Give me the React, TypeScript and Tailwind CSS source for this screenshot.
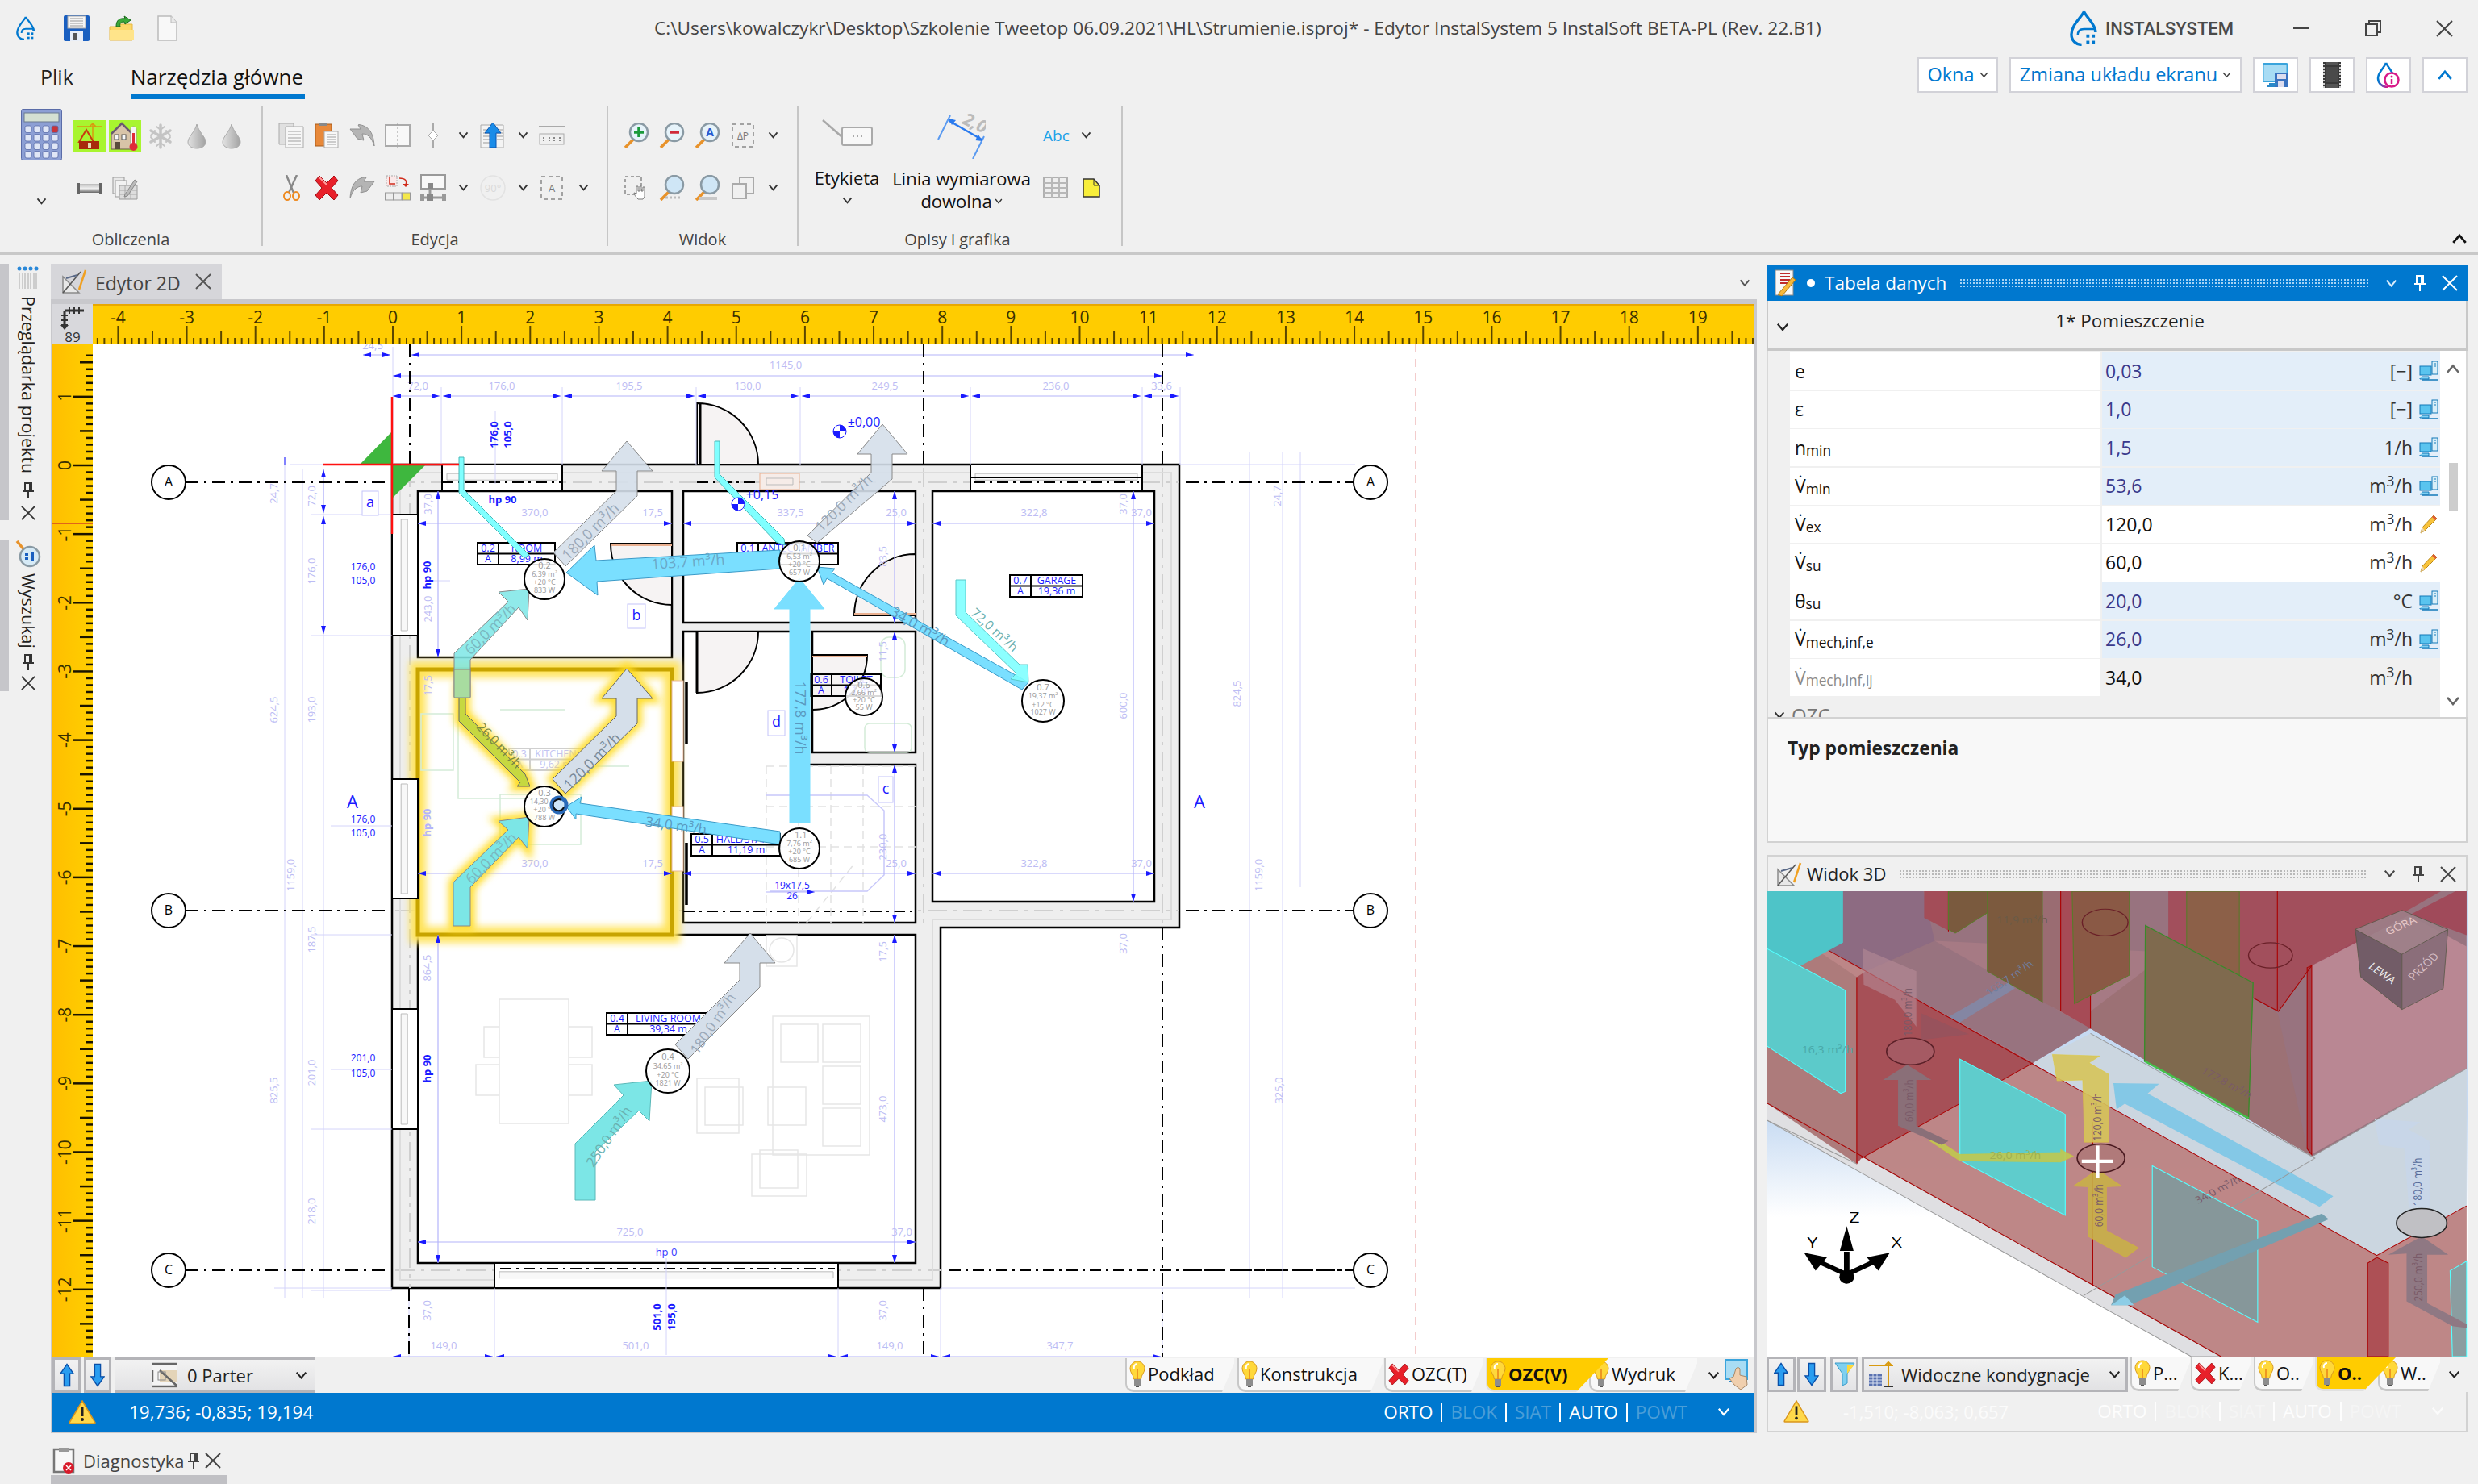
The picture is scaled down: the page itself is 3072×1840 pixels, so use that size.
import React from "react";

const BLUE = "#0078cf";

// --- small shared icons ---

const Chev = ({ size = 14, color = "#222", up = false }: { size?: number; color?: string; up?: boolean }) => (
  <svg width={size} height={size * 0.7} viewBox="0 0 14 10" className="shrink-0">
    <path d={up ? "M1.5 8.5 7 2l5.5 6.5" : "M1.5 1.5 7 8l5.5-6.5"} fill="none" stroke={color} strokeWidth="2" />
  </svg>
);

const Pin = ({ color = "#444" }: { color?: string }) => (
  <svg width="16" height="22" viewBox="0 0 16 22" className="shrink-0">
    <path d="M4 2h8v10H4zM1 12h14M8 12v9M10 2v10" fill="none" stroke={color} strokeWidth="2" />
  </svg>
);

const CloseX = ({ size = 20, color = "#444", width = 2 }: { size?: number; color?: string; width?: number }) => (
  <svg width={size} height={size} viewBox="0 0 20 20" className="shrink-0">
    <path d="M1 1l18 18M19 1 1 19" stroke={color} strokeWidth={width} />
  </svg>
);

const Bulb = () => (
  <svg width="20" height="34" viewBox="0 0 20 34" className="shrink-0">
    <path d="M10 1C4 1 1 6 1 10c0 5 4 7 4.500 13h9C15 17 19 15 19 10c0-4-3-9-9-9z" fill="#ffd83a" stroke="#d99a1c" />
    <path d="M10 4c-3 0-5 3-4 6" stroke="#fff" strokeWidth="2" fill="none" />
    <path d="M10 23V11" stroke="#e8821a" strokeWidth="1.500" />
    <rect x="6" y="23" width="8" height="8" fill="#8d8d8d" />
    <rect x="8" y="31" width="4" height="2" fill="#555" />
  </svg>
);

const RedX = ({ w = 30, h = 32 }: { w?: number; h?: number }) => (
  <svg width={w} height={h} viewBox="0 0 30 32" className="shrink-0">
    <path d="M6 1l9 9 9-9 5 6-8 9 8 9-5 6-9-9-9 9-5-6 8-9-8-9z" fill="#e8202a" stroke="#a00e14" />
    <path d="M6 3l9 9" stroke="#ff9a9a" strokeWidth="2" />
  </svg>
);

const Warn = ({ w = 34, h = 30 }: { w?: number; h?: number }) => (
  <svg width={w} height={h} viewBox="0 0 34 30" className="shrink-0">
    <path d="M17 1 33 28a1 1 0 0 1-1 1H2a1 1 0 0 1-1-1z" fill="#ffd84a" stroke="#d9951c" strokeWidth="1.500" />
    <path d="M17 8v12" stroke="#222" strokeWidth="3" />
    <circle cx="17" cy="24" r="2" fill="#222" />
  </svg>
);

const ArrowBtn = ({ up, w = 20, h = 32 }: { up?: boolean; w?: number; h?: number }) => (
  <svg width={w} height={h} viewBox="0 0 20 32" className="shrink-0">
    <path
      d={up ? "M10 1 19 14h-5v17H6V14H1z" : "M10 31 19 18h-5V1H6v17H1z"}
      fill="#2a9df0"
      stroke="#0a4fa8"
      strokeWidth="1.500"
    />
  </svg>
);

const Computer = () => (
  <svg width="24" height="26" viewBox="0 0 24 26" className="shrink-0">
    <rect x="1" y="7" width="14" height="11" fill="#5ac4ef" stroke="#1278b8" />
    <path d="M4 20h8v3H1v-1" fill="#7fd0f2" stroke="#1278b8" />
    <rect x="16" y="1" width="7" height="16" fill="#d8eef8" stroke="#1278b8" />
    <path d="M18 4h3M18 7h3" stroke="#1278b8" />
    <path d="M3 24h20" stroke="#1278b8" strokeWidth="1.500" />
  </svg>
);

const Pencil = () => (
  <svg width="24" height="26" viewBox="0 0 24 26" className="shrink-0">
    <path d="M2 24l2-7L18 2l4 4L7 21z" fill="#f8c23a" stroke="#b88a20" />
    <path d="M18 2l4 4-2 2-4-4z" fill="#e05a3a" />
    <path d="M2 24l2-7 3 4z" fill="#eed8b0" />
  </svg>
);

const Drafting = () => (
  <svg width="32" height="32" viewBox="0 0 32 32" className="shrink-0">
    <path d="M2 30V10l20 20z" fill="#e8e8e8" stroke="#8a8a8a" strokeWidth="1.500" />
    <path d="M2 30 24 4" stroke="#555" strokeWidth="1.500" />
    <path d="M6 12 20 8" stroke="#5a6a88" strokeWidth="2" />
    <path d="M22 26 30 2" stroke="#f0a020" strokeWidth="2.500" />
  </svg>
);

// ribbon icons: all drawn at the size they have in the toolbar
const Calculator = () => (
  <svg width="51" height="64" viewBox="0 0 51 64" className="shrink-0">
    <rect x="0.500" y="0.500" width="50" height="63" rx="2" fill="#8c9fd4" stroke="#5a6ca8" />
    <rect x="4" y="5" width="43" height="11" fill="#d4e0d2" stroke="#6a7a90" />
    {[0, 1, 2, 3].flatMap((r) =>
      [0, 1, 2, 3].map((c) => (
        <rect key={`${r}-${c}`} x={5 + c * 11} y={21 + r * 10.500} width="8" height="8.500" rx="2" fill={r === 0 && c === 3 ? "#c8343a" : "#dfe6f6"} stroke="#5a6ca8" strokeWidth="0.800" />
      ))
    )}
  </svg>
);

const LimeCrane = () => (
  <div className="w-[40px] h-[40px] bg-[#a8f52f] shrink-0">
    <svg width="40" height="40" viewBox="0 0 40 40">
      <path d="M5 8h31M24 4v30M20 8l4-4 4 4" stroke="#d89a10" strokeWidth="1.500" fill="none" />
      <path d="M16 12 7 27h18z" fill="none" stroke="#c83a10" strokeWidth="2" />
      <rect x="7" y="26" width="25" height="10" fill="#a82a0c" />
      <rect x="18" y="28" width="4" height="6" fill="#e8d8b0" />
    </svg>
  </div>
);

const LimeHouse = () => (
  <div className="w-[40px] h-[40px] bg-[#a8f52f] shrink-0">
    <svg width="40" height="40" viewBox="0 0 40 40">
      <path d="M3 17 16 4l13 13v19H3z" fill="#d8c4a8" stroke="#6a5a48" />
      <path d="M3 17 16 4l13 13" stroke="#6a5a70" strokeWidth="2.500" fill="none" />
      <rect x="7" y="18" width="5" height="6" fill="#f8f8f8" stroke="#555" />
      <rect x="16" y="18" width="5" height="6" fill="#f8f8f8" stroke="#555" />
      <rect x="8" y="27" width="6" height="9" fill="#5a4a3a" />
      <rect x="27" y="8" width="7" height="24" rx="3" fill="#f4f4f4" stroke="#999" />
      <rect x="29" y="16" width="3" height="16" fill="#e02a3a" />
      <circle cx="30.500" cy="33" r="5" fill="#e02a3a" />
    </svg>
  </div>
);

const Snow = () => (
  <svg width="31" height="32" viewBox="0 0 31 32" className="shrink-0">
    <g stroke="#c4c4c4" strokeWidth="3.500" strokeLinecap="round">
      <path d="M15 2v28M3 9l24 14M27 9 3 23" />
      <path d="M10 4l5 4 5-4M10 28l5-4 5 4M3 15l5-6M27 15l-5-6M3 17l5 6M27 17l-5 6" strokeWidth="2" fill="none" />
    </g>
  </svg>
);

const Drop = () => (
  <svg width="24" height="32" viewBox="0 0 24 32" className="shrink-0">
    <defs>
      <linearGradient id="dropGray" x1="0" x2="1">
        <stop offset="0" stopColor="#e2e2e2" />
        <stop offset="1" stopColor="#a2a2a2" />
      </linearGradient>
    </defs>
    <path d="M12 1C10 10 1 17 1 23c0 5 5 8 11 8s11-3 11-8C23 17 14 10 12 1z" fill="url(#dropGray)" stroke="#aaa" />
  </svg>
);

const Pipe = () => (
  <svg width="30" height="13" viewBox="0 0 30 13" className="shrink-0">
    <defs>
      <linearGradient id="pipeG" x1="0" x2="0" y1="0" y2="1">
        <stop offset="0" stopColor="#bbb" />
        <stop offset="0.500" stopColor="#eee" />
        <stop offset="1" stopColor="#666" />
      </linearGradient>
    </defs>
    <rect x="2" y="1" width="26" height="11" fill="url(#pipeG)" />
    <rect width="3" height="13" fill="#666" />
    <rect x="27" width="3" height="13" fill="#666" />
  </svg>
);

const PagesPencil = () => (
  <svg width="33" height="29" viewBox="0 0 33 29" className="shrink-0">
    <path d="M1 1h14v20H1z" fill="#e8e8e8" stroke="#999" />
    <path d="M4 5h14v20H4z" fill="#f2f2f2" stroke="#999" />
    <path d="M9 11h22v17H9z" fill="#ddd" stroke="#999" />
    <path d="M16 11v17M23 11v17M9 17h22M9 22h22" stroke="#aaa" />
    <path d="M16 22 28 4l3 2-12 18-4 1z" fill="#bbb" stroke="#888" />
  </svg>
);

const CopyPages = () => (
  <svg width="32" height="32" viewBox="0 0 32 32" className="shrink-0">
    <path d="M1 1h18v26H1z" fill="#e0e0e0" stroke="#aaa" />
    <path d="M9 5h22v26H9z" fill="#f6f6f6" stroke="#aaa" />
    <path d="M12 11h16M12 15h16M12 19h16M12 23h16M12 27h16" stroke="#a0a0a0" />
  </svg>
);

const PasteIcon = () => (
  <svg width="30" height="32" viewBox="0 0 30 32" className="shrink-0">
    <rect x="1" y="2" width="20" height="27" fill="#e8893a" stroke="#a85a18" />
    <rect x="6" y="0" width="10" height="4" fill="#888" />
    <path d="M12 11h17v20H12z" fill="#f8f8f8" stroke="#aaa" />
    <path d="M15 15h11M15 18h11M15 21h11M15 24h11M15 27h11" stroke="#a0a0a0" />
  </svg>
);

const TurnArrow = ({ flip = false }: { flip?: boolean }) => (
  <svg width="32" height="28" viewBox="0 0 32 28" className="shrink-0" style={flip ? { transform: "scaleX(-1)" } : undefined}>
    <path d="M1 6h13L11 1l1-0.500 C22 2 30 8 31 27c-3-10-8-15-15-15l2 8-8-2z" fill="#b4b4b4" stroke="#909090" />
  </svg>
);

const MirrorBox = () => (
  <svg width="32" height="32" viewBox="0 0 32 32" className="shrink-0">
    <rect x="1" y="3" width="30" height="26" fill="#f8f8f8" stroke="#aaa" strokeWidth="2" />
    <path d="M16 0v32" stroke="#999" strokeDasharray="3 2" />
  </svg>
);

const DiamondLine = () => (
  <svg width="28" height="32" viewBox="0 0 28 32" className="shrink-0">
    <path d="M14 0v10M14 22v10" stroke="#aaa" strokeWidth="2" />
    <path d="M14 10l6 6-6 6-6-6z" fill="#fff" stroke="#aaa" />
  </svg>
);

const DocUp = () => (
  <svg width="32" height="32" viewBox="0 0 32 32" className="shrink-0">
    <path d="M1 3h28v28H1z" fill="#f4f4f4" stroke="#aaa" />
    <path d="M4 9h8M4 13h8M4 17h8M4 21h8M4 25h8M21 9h7M21 13h7M21 17h7M21 21h7" stroke="#999" />
    <path d="M16 0 26 13h-6v18h-8V13H6z" fill="#1a8ce8" stroke="#0a55b0" />
  </svg>
);

const RulerBox = () => (
  <svg width="32" height="24" viewBox="0 0 32 24" className="shrink-0">
    <path d="M0 1h32" stroke="#aaa" strokeWidth="2" />
    <rect x="1" y="10" width="30" height="13" fill="#f0f0f0" stroke="#aaa" />
    <path d="M6 14v6M13 14v6M19 14v6M26 14v6" stroke="#888" strokeDasharray="2 1" strokeWidth="2" />
  </svg>
);

const Scissors = () => (
  <svg width="23" height="32" viewBox="0 0 23 32" className="shrink-0">
    <path d="M5 0l9 22M18 0 8 22" stroke="#888" strokeWidth="2.500" />
    <ellipse cx="6" cy="26" rx="4" ry="5" fill="none" stroke="#ee8a20" strokeWidth="2" />
    <ellipse cx="17" cy="26" rx="4" ry="5" fill="none" stroke="#ee8a20" strokeWidth="2" />
  </svg>
);

const LayerMove = () => (
  <svg width="32" height="32" viewBox="0 0 32 32" className="shrink-0">
    <rect x="2" y="1" width="13" height="13" fill="#fbe8e8" stroke="#aaa" strokeDasharray="2 1" />
    <path d="M6 3v8h7" stroke="#d02a1a" strokeWidth="1.500" fill="none" />
    <path d="M18 4c8 0 10 4 8 8" stroke="#d02a1a" strokeWidth="1.500" fill="none" />
    <path d="M22 11h8l-4 4z" fill="#d02a1a" />
    <rect x="0.500" y="22" width="10" height="9" fill="#eee" stroke="#999" />
    <rect x="11" y="22" width="10" height="9" fill="#eee" stroke="#999" />
    <rect x="21.500" y="22" width="10" height="9" fill="#f4e84a" stroke="#999" />
  </svg>
);

const NodeBox = () => (
  <svg width="32" height="33" viewBox="0 0 32 33" className="shrink-0">
    <rect x="1" y="1" width="30" height="17" fill="#f8f8f8" stroke="#999" strokeWidth="2" />
    <path d="M1 29h30M12 14v15" stroke="#999" strokeWidth="3" />
    <rect x="9" y="11" width="7" height="7" fill="#888" />
    <rect x="8" y="25" width="8" height="8" fill="#888" />
    <rect x="0" y="25" width="5" height="8" fill="#999" />
    <rect x="27" y="25" width="5" height="8" fill="#999" />
  </svg>
);

const Rot90 = () => (
  <svg width="32" height="32" viewBox="0 0 32 32" className="shrink-0">
    <circle cx="16" cy="16" r="15" fill="none" stroke="#e2e2e2" strokeWidth="1.500" />
    <text x="16" y="21" textAnchor="middle" fontSize="13" fill="#dadada">90°</text>
  </svg>
);

const DashBox = ({ text, w = 28, h = 30, size = 13 }: { text: string; w?: number; h?: number; size?: number }) => (
  <svg width={w} height={h} viewBox={`0 0 ${w} ${h}`} className="shrink-0">
    <rect x="1" y="1" width={w - 2} height={h - 2} fill="none" stroke="#888" strokeWidth="1.500" strokeDasharray="5 4" />
    <text x={w / 2} y={h / 2 + 5} textAnchor="middle" fontSize={size} fill="#777">{text}</text>
  </svg>
);

const Magnifier = ({ kind }: { kind: "plus" | "minus" | "a" | "plain" | "shade" }) => (
  <svg width="32" height="32" viewBox="0 0 32 32" className="shrink-0">
    <path d="M12 21 2 31" stroke="#e8922a" strokeWidth="3.500" />
    <circle cx="19" cy="12" r="11" fill={kind === "plain" || kind === "shade" ? "#cfe6f6" : "#e6f3fa"} stroke="#8a9aa4" strokeWidth="2.500" />
    {kind === "plus" && <path d="M19 6v12M13 12h12" stroke="#1a9a3a" strokeWidth="3.500" />}
    {kind === "minus" && <path d="M13 12h12" stroke="#d02a3a" strokeWidth="3.500" />}
    {kind === "a" && <text x="19" y="17" textAnchor="middle" fontSize="14" fontWeight="700" fill="#2a5ad0">A</text>}
    {kind === "shade" && <path d="M6 27h22v4H6z" fill="#c8c8c8" />}
    {kind === "plain" && <path d="M8 28h20" stroke="#bbb" strokeWidth="3" strokeDasharray="3 2" />}
  </svg>
);

const HandDash = () => (
  <svg width="30" height="30" viewBox="0 0 30 30" className="shrink-0">
    <rect x="1" y="1" width="20" height="22" fill="none" stroke="#888" strokeWidth="1.500" strokeDasharray="4 3" />
    <path d="M17 29c-3-3-5-6-5-8l3 1v-9h2v6h2v-6h2v6h2v-5h2v12l-2 3z" fill="#fff" stroke="#777" />
  </svg>
);

const TwoBoxes = () => (
  <svg width="28" height="28" viewBox="0 0 28 28" className="shrink-0">
    <rect x="10" y="1" width="17" height="20" fill="none" stroke="#aaa" strokeWidth="2" />
    <rect x="1" y="9" width="17" height="18" fill="#f0f0f0" stroke="#aaa" strokeWidth="2" />
  </svg>
);

const Label = () => (
  <svg width="63" height="33" viewBox="0 0 63 33" className="shrink-0">
    <path d="M1 1 25 22" stroke="#a8a8a8" strokeWidth="2.500" />
    <rect x="25" y="10" width="37" height="22" rx="2" fill="#f8f8f8" stroke="#aaa" strokeWidth="2" />
    <path d="M38 21h2M43 21h2M48 21h2" stroke="#aaa" strokeWidth="2" />
  </svg>
);

const DimLine = () => (
  <svg width="60" height="60" viewBox="0 0 60 60" className="shrink-0">
    <path d="M16 6 1 36M58 32 44 60" stroke="#5a9af0" strokeWidth="2" />
    <path d="M15 13 55 36" stroke="#2a7aee" strokeWidth="2.500" />
    <path d="M14 10l9 2-5 6zM56 38l-9-1 4-7z" fill="#2a7aee" />
    <text x="30" y="16" fontSize="22" fontStyle="italic" fontWeight="700" fill="#bbb" transform="rotate(25 30 16)">2,0</text>
  </svg>
);

const GridIcon = () => (
  <svg width="31" height="28" viewBox="0 0 31 28" className="shrink-0">
    <rect x="1" y="1" width="29" height="25" fill="#eee" stroke="#b0b0b0" strokeWidth="2" />
    <path d="M11 1v25M20 1v25M1 8h29M1 14h29M1 20h29" stroke="#b8b8b8" strokeWidth="2" />
  </svg>
);

const YellowDoc = () => (
  <svg width="22" height="24" viewBox="0 0 22 24" className="shrink-0">
    <path d="M1 1h13l7 8v14H1z" fill="#f8ee3a" stroke="#333" strokeWidth="1.500" />
    <path d="M14 1v8h7" fill="none" stroke="#333" />
  </svg>
);

// --- title bar icons ---
const LogoDrop = ({ w, h, small }: { w: number; h: number; small?: boolean }) => (
  <svg width={w} height={h} viewBox="0 0 36 44" className="shrink-0">
    <path d="M18 1C14 9 2 18 2 30c0 8 6 13 13 13" fill="none" stroke={BLUE} strokeWidth="3.500" />
    <path d="M18 1c4 8 14 15 15 26" fill="none" stroke={BLUE} strokeWidth="3.500" />
    <path d="M10 31c0-7 4-8 8-8h14v4" fill="none" stroke={BLUE} strokeWidth={small ? 3 : 2.500} />
    <rect x="21" y="30" width="4" height="4" fill={BLUE} />
    <rect x="28" y="30" width="4" height="4" fill={BLUE} />
    <rect x="21" y="38" width="4" height="4" fill={BLUE} />
    <rect x="28" y="38" width="4" height="4" fill={BLUE} />
  </svg>
);

const Floppy = () => (
  <svg width="32" height="32" viewBox="0 0 32 32" className="shrink-0">
    <rect width="32" height="32" rx="2" fill="#1a5fc0" />
    <rect x="5" y="1" width="22" height="15" fill="#f4f4f4" stroke="#aaa" />
    <path d="M8 4h16M8 7h16M8 10h16M8 13h16" stroke="#999" />
    <rect x="8" y="20" width="16" height="12" fill="#e8eef8" />
    <rect x="11" y="22" width="5" height="9" fill="#555" />
  </svg>
);

const OpenFolder = () => (
  <svg width="32" height="32" viewBox="0 0 32 32" className="shrink-0">
    <path d="M1 14h10l2-3h16v20H1z" fill="#fdd868" stroke="#e8b840" />
    <path d="M1 31V18h30v13z" fill="#ffe48a" />
    <path d="M9 14C9 6 13 3 20 4l-1-3 8 5-7 5-1-3c-4 0-6 2-5 6z" fill="#3aa83a" stroke="#1a6a1a" />
  </svg>
);

const BlankDoc = () => (
  <svg width="25" height="32" viewBox="0 0 25 32" className="shrink-0">
    <path d="M1 1h16l7 8v22H1z" fill="#f8f8f8" stroke="#bbb" strokeWidth="1.500" />
    <path d="M17 1v8h7" fill="#e8e8e8" stroke="#bbb" />
  </svg>
);

const SaveScreen = () => (
  <svg width="32" height="30" viewBox="0 0 32 30">
    <rect x="0.500" y="1" width="30" height="22" rx="1" fill="#a8dcf4" stroke="#3aa4dc" strokeWidth="2" />
    <rect x="15" y="12" width="17" height="18" fill="#3a72c0" />
    <rect x="18" y="14" width="11" height="6" fill="#dde" />
    <rect x="19" y="23" width="7" height="7" fill="#dde" />
    <path d="M8 26h10M5 29h10" stroke="#2a88c8" strokeWidth="2" />
  </svg>
);

const FilmStrip = () => (
  <svg width="22" height="32" viewBox="0 0 22 32">
    <rect width="22" height="32" fill="#3a3a3a" />
    <rect x="3" y="0" width="16" height="3" fill="#555" />
    <rect x="3" y="6" width="16" height="19" fill="#4a4a4a" />
    <rect x="3" y="27" width="16" height="5" fill="#555" />
    <path d="M1 2v30M21 2v30" stroke="#fff" strokeWidth="1.500" strokeDasharray="2 2" />
  </svg>
);

const InfoDrop = () => (
  <svg width="30" height="32" viewBox="0 0 30 32">
    <defs>
      <linearGradient id="infoG" x1="0" x2="1" y1="0" y2="1">
        <stop offset="0.400" stopColor={BLUE} />
        <stop offset="1" stopColor="#e0108a" />
      </linearGradient>
    </defs>
    <path d="M12 1C9 8 2 13 2 20c0 6 5 11 12 11" fill="none" stroke="url(#infoG)" strokeWidth="2.500" />
    <path d="M12 1c3 6 7 10 8 13" fill="none" stroke={BLUE} strokeWidth="2.500" />
    <circle cx="19" cy="22" r="8.500" fill="#fff" stroke="#d81888" strokeWidth="2.500" />
    <path d="M19 21v6" stroke="#d81888" strokeWidth="2.500" />
    <circle cx="19" cy="18" r="1.500" fill="#d81888" />
  </svg>
);

// --- ribbon ---
const RChev = () => (
  <div className="flex justify-center items-center">
    <Chev size={13} color="#333" />
  </div>
);

const GroupLabel = ({ children }: { children: React.ReactNode }) => (
  <div className="mt-auto mb-[-6px] text-center text-[20px] leading-[28px] text-[#444]">{children}</div>
);

const Obliczenia = () => (
  <div className="w-[324px] h-[174px] shrink-0 flex flex-col">
    <div className="flex h-[150px]">
      <div className="w-[77px] pl-[26px] pt-[4px] flex flex-col items-start">
        <Calculator />
        <div className="mt-[46px] ml-[19px]"><Chev size={13} color="#333" /></div>
      </div>
      <div className="flex flex-col ml-[14px]">
        <div className="flex items-center gap-[4px] mt-[18px] h-[40px]">
          <LimeCrane />
          <LimeHouse />
          <div className="ml-[5px]"><Snow /></div>
          <div className="ml-[13px]"><Drop /></div>
          <div className="ml-[15px]"><Drop /></div>
        </div>
        <div className="flex items-center gap-[13px] mt-[30px] ml-[5px]">
          <Pipe />
          <PagesPencil />
        </div>
      </div>
    </div>
    <GroupLabel>Obliczenia</GroupLabel>
  </div>
);

const Sep = () => <div className="w-[2px] h-[174px] bg-[#c6c6c6] shrink-0" />;

const Edycja = () => (
  <div className="w-[426px] h-[174px] shrink-0 flex flex-col">
    <div className="grid grid-cols-[51px_56px_32px_56px_32px_42px_32px_42px_30px_48px] grid-rows-[65px_65px] items-center justify-items-center mt-[4px]">
      <div className="pl-[19px]"><CopyPages /></div>
      <PasteIcon />
      <TurnArrow />
      <MirrorBox />
      <DiamondLine />
      <RChev />
      <DocUp />
      <RChev />
      <RulerBox />
      <div />
      <div className="pl-[19px]"><Scissors /></div>
      <RedX />
      <TurnArrow flip />
      <LayerMove />
      <NodeBox />
      <RChev />
      <Rot90 />
      <RChev />
      <DashBox text="A" />
      <RChev />
    </div>
    <GroupLabel>Edycja</GroupLabel>
  </div>
);

const Widok = () => (
  <div className="w-[234px] h-[174px] shrink-0 flex flex-col">
    <div className="grid grid-cols-[51px_56px_32px_56px_18px] grid-rows-[65px_65px] items-center justify-items-center mt-[4px]">
      <div className="pl-[19px]"><Magnifier kind="plus" /></div>
      <Magnifier kind="minus" />
      <Magnifier kind="a" />
      <DashBox text="ΔP" h={30} size={12} />
      <RChev />
      <div className="pl-[19px]"><HandDash /></div>
      <Magnifier kind="plain" />
      <Magnifier kind="shade" />
      <TwoBoxes />
      <RChev />
    </div>
    <GroupLabel>Widok</GroupLabel>
  </div>
);

const Opisy = () => (
  <div className="w-[400px] h-[174px] shrink-0 flex flex-col">
    <div className="flex h-[146px]">
      <div className="w-[120px] flex flex-col items-center pt-[17px]">
        <Label />
        <div className="text-[22px] leading-[28px] mt-[25px] text-[#111]">Etykieta</div>
        <div className="mt-[10px]"><Chev size={13} color="#333" /></div>
      </div>
      <div className="w-[164px] flex flex-col items-center pt-[6px]">
        <DimLine />
        <div className="text-[22px] leading-[28px] mt-[10px] whitespace-nowrap text-[#111]">Linia wymiarowa</div>
        <div className="flex items-center gap-[3px] text-[22px] leading-[28px] text-[#111]">dowolna <Chev size={10} color="#333" /></div>
      </div>
      <div className="flex flex-col pt-[22px] pl-[19px]">
        <div className="flex items-center gap-[14px] h-[30px]">
          <span className="text-[#1ba1e8] text-[19px]">Abc</span>
          <Chev size={13} color="#333" />
        </div>
        <div className="flex items-center gap-[18px] mt-[36px]">
          <GridIcon />
          <YellowDoc />
        </div>
      </div>
    </div>
    <div className="w-[394px] mt-auto mb-[-6px] text-center text-[20px] leading-[28px] text-[#444]">Opisy i grafika</div>
  </div>
);

const TopButton = ({ children, w }: { children: React.ReactNode; w: string }) => (
  <div className={`${w} h-[44px] bg-white border-2 border-[#d2d2d8] flex items-center justify-center gap-[6px] text-[23.500px] text-[#0078cf] shrink-0`}>
    {children}
  </div>
);

// --- rulers ---
const TopRuler = () => {
  const ticks: React.ReactNode[] = [];
  for (let i = -46; i <= 200; i++) {
    const x = 372 + i * 8.515;
    const len = i % 10 === 0 ? 23 : i % 5 === 0 ? 16 : 8;
    ticks.push(<line key={i} x1={x} x2={x} y1={50} y2={50 - len} stroke="#5a4600" strokeWidth="2" />);
  }
  const labels: React.ReactNode[] = [];
  for (let n = -4; n <= 19; n++) {
    labels.push(
      <text key={n} x={372 + n * 85.15} y={24} textAnchor="middle" fontSize="21" fill="#3a3000">{n}</text>
    );
  }
  return (
    <svg width="2060" height="50" viewBox="0 0 2060 50" className="block bg-[#ffcc00]">
      <path d="M0 1h2060" stroke="#e8a800" strokeWidth="2" />
      {ticks}
      {labels}
    </svg>
  );
};

const LeftRuler = () => {
  const ticks: React.ReactNode[] = [];
  for (let i = -16; i <= 140; i++) {
    const y = 150 + i * 8.515;
    const len = i % 10 === 0 ? 24 : i % 5 === 0 ? 16 : 9;
    ticks.push(<line key={i} x1={50} x2={50 - len} y1={y} y2={y} stroke="#1a1400" strokeWidth="2.500" />);
  }
  const labels: React.ReactNode[] = [];
  for (let n = 1; n >= -12; n--) {
    const y = 150 - n * 85.15;
    labels.push(
      <text key={n} x={17} y={y} textAnchor="middle" fontSize="21" fill="#3a3000" transform={`rotate(-90 17 ${y})`} dominantBaseline="middle">{n}</text>
    );
  }
  return (
    <svg width="50" height="1256" viewBox="0 0 50 1256" className="block">
      <defs>
        <linearGradient id="rulerL" x1="0" x2="1">
          <stop offset="0" stopColor="#ffbe00" />
          <stop offset="1" stopColor="#ffcf00" />
        </linearGradient>
      </defs>
      <rect width="50" height="1256" fill="url(#rulerL)" />
      <line x1="0" x2="50" y1="222" y2="222" stroke="#e0641a" strokeWidth="2" />
      {ticks}
      {labels}
    </svg>
  );
};

// --- CAD drawing, coordinates are page pixels through the viewBox ---
const DT = ({ x, y, t, r, fill = "#bcbcf4", size = 13, bold }: { x: number; y: number; t: string; r?: number; fill?: string; size?: number; bold?: boolean }) => (
  <text
    x={x}
    y={y}
    textAnchor="middle"
    dominantBaseline="middle"
    fontSize={size}
    fontWeight={bold ? 700 : 400}
    fill={fill}
    transform={r !== undefined ? `rotate(${r} ${x} ${y})` : undefined}
  >
    {t}
  </text>
);

const Dim = ({ x1, y1, x2, y2 }: { x1: number; y1: number; x2: number; y2: number }) => (
  <line x1={x1} y1={y1} x2={x2} y2={y2} stroke="#b4b4fa" strokeWidth="1.200" markerStart="url(#ah)" markerEnd="url(#ah)" />
);

const Ext = ({ d }: { d: string }) => <path d={d} stroke="#d4d4fa" strokeWidth="1" fill="none" />;

const Tag = ({ x, y, w, a, b, v, c = 26, pale }: { x: number; y: number; w: number; a: string; b: string; v: string; c?: number; pale?: boolean }) => {
  const col = pale ? "#cfcfcf" : "#000";
  const txt = pale ? "#c4c4f2" : "#1a1aff";
  return (
    <g>
      <rect x={x} y={y} width={w} height={27} fill="none" stroke={col} strokeWidth="2" />
      <path d={`M${x} ${y + 13.500}h${w}M${x + c} ${y}v27`} stroke={col} strokeWidth="2" />
      <DT x={x + c / 2} y={y + 7.500} t={a} fill={txt} size={12.500} />
      <DT x={x + c + (w - c) / 2} y={y + 7.500} t={b} fill={txt} size={12.500} />
      <DT x={x + c / 2} y={y + 21} t="A" fill={txt} size={12.500} />
      <DT x={x + c + (w - c) / 2} y={y + 21} t={v} fill={txt} size={12.500} />
    </g>
  );
};

const Room = ({ x, y, r, l }: { x: number; y: number; r: number; l: string[] }) => (
  <g>
    <circle cx={x} cy={y} r={r} fill="#fff" fillOpacity="0.85" stroke="#000" strokeWidth="2" />
    <DT x={x} y={y - r * 0.62} t={l[0]} fill="#999" size={11} />
    <DT x={x} y={y - r * 0.2} t={l[1]} fill="#999" size={9} />
    <DT x={x} y={y + r * 0.2} t={l[2]} fill="#999" size={9} />
    <DT x={x} y={y + r * 0.58} t={l[3]} fill="#999" size={9} />
  </g>
);

const Axis = ({ y, label }: { y: number; label: string }) => (
  <g>
    <path d={`M230 ${y}H482`} stroke="#000" strokeWidth="2" strokeDasharray="16 7 3 7" />
    <path d={`M1470 ${y}H1678`} stroke="#000" strokeWidth="2" strokeDasharray="16 7 3 7" />
    <circle cx="209" cy={y} r="21" fill="#fff" stroke="#000" strokeWidth="2" />
    <circle cx="1699" cy={y} r="21" fill="#fff" stroke="#000" strokeWidth="2" />
    <DT x={209} y={y + 1} t={label} fill="#000" size={16} />
    <DT x={1699} y={y + 1} t={label} fill="#000" size={16} />
  </g>
);

const Door = ({ d }: { d: string }) => <path d={d} fill="#f6f3f3" stroke="#000" strokeWidth="2" />;

const Win = ({ x, y, w, h }: { x: number; y: number; w: number; h: number }) => (
  <g>
    <rect x={x} y={y} width={w} height={h} fill="#fff" stroke="#000" strokeWidth="2" />
    {w > h ? (
      <path d={`M${x + 6} ${y + h * 0.35}h${w - 12}v${h * 0.25}h${-(w - 12)}z`} fill="#f8f8f8" stroke="#bbb" />
    ) : (
      <path d={`M${x + w * 0.35} ${y + 6}v${h - 12}h${w * 0.25}v${-(h - 12)}z`} fill="#f8f8f8" stroke="#bbb" />
    )}
  </g>
);

const VENT = "#7adfff";
const SUP = "#7ce6e6";
const EXH = "#d5dfea";

const Plan = () => (
  <svg width="2060" height="1256" viewBox="115 427 2060 1256" className="block bg-white">
    <defs>
      <marker id="ah" viewBox="0 0 10 6" refX="10" refY="3" markerWidth="10" markerHeight="6" orient="auto-start-reverse" markerUnits="userSpaceOnUse">
        <path d="M0 0 10 3 0 6z" fill="#1a1aff" />
      </marker>
      <filter id="glow" x="-20%" y="-20%" width="140%" height="140%">
        <feGaussianBlur stdDeviation="5" />
      </filter>
    </defs>

    <path d="M1755 427V1683" stroke="#f0bcbc" strokeWidth="1.500" strokeDasharray="10 8" />

    {/* building shell */}
    <path d="M486 576H1462V1150H1166V1597H486Z" fill="#eeeeee" stroke="#000" strokeWidth="2.500" />
    <g stroke="#cfcfcf" strokeWidth="2" fill="none" strokeDasharray="24 8 4 8">
      <path d="M490 598H1462M490 1129H1462M490 1575H1166M508 580V1597M1145 580V1150M1441 580V1150" />
    </g>
    <path d="M496 586H1452V1140H1156V1587H496Z" fill="none" stroke="#dcdcdc" strokeWidth="2" />

    {/* rooms */}
    <g fill="#fff" stroke="#000" strokeWidth="2.500">
      <rect x="518" y="609" width="315" height="206" />
      <rect x="847" y="609" width="288" height="163" />
      <rect x="1156" y="609" width="275" height="509" />
      <path d="M847 783H998V948H1135V1144H847Z" />
      <rect x="1007" y="783" width="128" height="150" />
      <rect x="518" y="1159" width="617" height="407" />
    </g>

    {/* kitchen, selected */}
    <rect x="518" y="830" width="315" height="329" fill="#fff" />
    <rect x="518" y="830" width="315" height="329" fill="none" stroke="#ffe35a" strokeWidth="20" filter="url(#glow)" />
    <rect x="518" y="830" width="315" height="329" fill="none" stroke="#c8a400" strokeWidth="5" />

    {/* windows */}
    <Win x={548} y={576} w={149} h={32} />
    <Win x={1203} y={576} w={213} h={32} />
    <Win x={613} y={1566} w={426} h={31} />
    <Win x={486} y={638} w={32} h={150} />
    <Win x={486} y={966} w={32} h={148} />
    <Win x={486} y={1251} w={32} h={149} />
    <path d="M1203 592H1416" stroke="#000" strokeWidth="2" />
    <path d="M864 598H990M1207 598H1412M548 598H697M847 1130H1135M620 1573H1035" stroke="#000" strokeWidth="2" strokeDasharray="14 6 3 6" />
    <path d="M1177 1575H1680" stroke="#000" strokeWidth="2" strokeDasharray="14 6 3 6" />
    <rect x="833" y="844" width="14" height="100" fill="#fff" stroke="#e8b89a" />
    <rect x="833" y="1000" width="14" height="80" fill="#fff" stroke="#e8b89a" />
    <path d="M851 846V922M851 1045V1122" stroke="#000" strokeWidth="3.500" />
    <rect x="942" y="587" width="49" height="20" fill="#f6ece8" stroke="#eab090" />
    <path d="M950 593h33v8h-33z" fill="none" stroke="#bbb" />

    {/* doors */}
    <Door d="M864 500V576H940A76 76 0 0 0 864 500Z" />
    <Door d="M757 674H833V750A76 76 0 0 1 757 674Z" />
    <Door d="M864 783H940A76 76 0 0 1 864 859Z" />
    <Door d="M1059 763H1135V687A76 76 0 0 0 1059 763Z" />
    <Door d="M1007 812H1075A68 68 0 0 1 1007 880Z" />
    <path d="M868 500V576M864 783V859" stroke="#000" strokeWidth="3" />
    <path d="M757 676H833M1059 761H1135M1007 814H1075" stroke="#eab090" strokeWidth="2" />

    {/* furniture */}
    <g fill="none" stroke="#e6e6e6" strokeWidth="1.500">
      <rect x="619" y="1239" width="86" height="154" />
      <path d="M619 1273H600V1311H619M705 1273H734V1311H705M619 1320H590V1358H619M705 1320H734V1358H705" />
      <rect x="958" y="1260" width="120" height="172" />
      <rect x="968" y="1270" width="46" height="47" />
      <rect x="1020" y="1270" width="47" height="47" />
      <rect x="1020" y="1322" width="47" height="47" />
      <rect x="1020" y="1374" width="47" height="47" />
      <rect x="864" y="1337" width="52" height="68" />
      <rect x="874" y="1348" width="47" height="47" />
      <rect x="952" y="1348" width="47" height="47" />
      <rect x="932" y="1431" width="68" height="52" />
      <rect x="942" y="1426" width="47" height="47" />
      <rect x="950" y="1160" width="38" height="38" />
      <circle cx="969" cy="1178" r="15" />
    </g>
    <g fill="none" stroke="#d4ecd8" strokeWidth="1.500">
      <rect x="522" y="885" width="40" height="70" />
      <path d="M568 880V990H680M720 950H780M620 880H700" />
      <rect x="620" y="985" width="100" height="62" />
      <rect x="1072" y="897" width="58" height="36" rx="6" />
      <rect x="1092" y="790" width="30" height="50" rx="10" />
    </g>
    <g fill="none" stroke="#e2e2e2" strokeWidth="1.500" strokeDasharray="10 6">
      <path d="M950 950H1135M950 1000H1135M950 1050H1135M950 950V1144M990 950V1144M1030 950V1144M1070 950V1144M1000 1144L1060 1070" />
    </g>
    <path d="M950 986H1075L1096 1005V1085L1075 1105H955" fill="none" stroke="#c8c8fa" strokeWidth="1.500" />

    {/* dimensions */}
    <Ext d="M487 430V576M547 480V576M697 480V576M863 480V576M992 480V576M1203 480V576M1416 480V576M1463 480V576" />
    <Ext d="M613 1597V1683M1039 1597V1683M1166 1597V1683M507 1597V1683M1441 1597V1683" />
    <Ext d="M386 638H486M386 788H486M386 1159H486M386 1400H486M386 1600H486M360 576H486M1462 576H1680M1166 1597H1680M486 1597H340" />
    <Ext d="M614 510V600M826 1560V1680M558 720H530M410 1024H486M410 1326H486" />
    <Ext d="M353 567V1610M375 581V1610M401 581V1610M1549 560V1610M1590 560V1610M1612 560V1100" />
    <Dim x1={450} y1={440} x2={484} y2={440} />
    <Dim x1={510} y1={440} x2={1480} y2={440} />
    <Dim x1={487} y1={466} x2={1441} y2={466} />
    <Dim x1={487} y1={491} x2={545} y2={491} />
    <Dim x1={549} y1={491} x2={695} y2={491} />
    <Dim x1={699} y1={491} x2={861} y2={491} />
    <Dim x1={865} y1={491} x2={990} y2={491} />
    <Dim x1={994} y1={491} x2={1201} y2={491} />
    <Dim x1={1205} y1={491} x2={1414} y2={491} />
    <Dim x1={1418} y1={491} x2={1461} y2={491} />
    {[649, 1083].map((y) => (
      <g key={y}>
        <Dim x1={518} y1={y} x2={833} y2={y} />
        <Dim x1={847} y1={y} x2={1135} y2={y} />
        <Dim x1={1156} y1={y} x2={1431} y2={y} />
      </g>
    ))}
    <Dim x1={518} y1={1540} x2={1135} y2={1540} />
    <Dim x1={487} y1={1682} x2={611} y2={1682} />
    <Dim x1={615} y1={1682} x2={1037} y2={1682} />
    <Dim x1={1041} y1={1682} x2={1164} y2={1682} />
    <Dim x1={1168} y1={1682} x2={1439} y2={1682} />
    <Dim x1={543} y1={609} x2={543} y2={815} />
    <Dim x1={543} y1={1159} x2={543} y2={1566} />
    <Dim x1={1109} y1={609} x2={1109} y2={772} />
    <Dim x1={1109} y1={783} x2={1109} y2={933} />
    <Dim x1={1109} y1={948} x2={1109} y2={1144} />
    <Dim x1={1109} y1={1159} x2={1109} y2={1566} />
    <Dim x1={1405} y1={609} x2={1405} y2={1118} />
    <Dim x1={401} y1={640} x2={401} y2={786} />
    <Dim x1={401} y1={582} x2={401} y2={636} />
    <path d="M353 567v10" stroke="#1a1aff" />
    <DT x={462} y={430} t="24,5" />
    <DT x={974} y={454} t="1145,0" />
    <DT x={518} y={480} t="72,0" />
    <DT x={622} y={480} t="176,0" />
    <DT x={780} y={480} t="195,5" />
    <DT x={927} y={480} t="130,0" />
    <DT x={1097} y={480} t="249,5" />
    <DT x={1309} y={480} t="236,0" />
    <DT x={1440} y={480} t="33,6" />
    <DT x={663} y={637} t="370,0" />
    <DT x={809} y={637} t="17,5" />
    <DT x={980} y={637} t="337,5" />
    <DT x={1111} y={637} t="25,0" />
    <DT x={1282} y={637} t="322,8" />
    <DT x={1415} y={637} t="37,0" />
    <DT x={663} y={1072} t="370,0" />
    <DT x={809} y={1072} t="17,5" />
    <DT x={1111} y={1072} t="25,0" />
    <DT x={1282} y={1072} t="322,8" />
    <DT x={1415} y={1072} t="37,0" />
    <DT x={781} y={1529} t="725,0" />
    <DT x={1118} y={1529} t="37,0" />
    <DT x={550} y={1670} t="149,0" />
    <DT x={788} y={1670} t="501,0" />
    <DT x={1103} y={1670} t="149,0" />
    <DT x={1314} y={1670} t="347,7" />
    <DT x={826} y={1554} t="hp 0" fill="#3a3aff" />
    <DT x={532} y={625} t="37,0" r={-90} />
    <DT x={532} y={755} t="243,0" r={-90} />
    <DT x={532} y={850} t="17,5" r={-90} />
    <DT x={531} y={1200} t="864,5" r={-90} />
    <DT x={531} y={1625} t="37,0" r={-90} />
    <DT x={1096} y={690} t="83,5" r={-90} />
    <DT x={1096} y={808} t="11,5" r={-90} />
    <DT x={1096} y={1050} t="230,0" r={-90} />
    <DT x={1096} y={1180} t="17,5" r={-90} />
    <DT x={1096} y={1375} t="473,0" r={-90} />
    <DT x={1394} y={625} t="37,0" r={-90} />
    <DT x={1394} y={875} t="600,0" r={-90} />
    <DT x={1394} y={1170} t="37,0" r={-90} />
    <DT x={1096} y={1625} t="37,0" r={-90} />
    <DT x={341} y={612} t="24,7" r={-90} />
    <DT x={341} y={880} t="624,5" r={-90} />
    <DT x={362} y={1085} t="1159,0" r={-90} />
    <DT x={341} y={1352} t="825,5" r={-90} />
    <DT x={388} y={615} t="72,0" r={-90} />
    <DT x={388} y={708} t="176,0" r={-90} />
    <DT x={388} y={880} t="193,0" r={-90} />
    <DT x={388} y={1165} t="187,5" r={-90} />
    <DT x={388} y={1330} t="201,0" r={-90} />
    <DT x={388} y={1502} t="218,0" r={-90} />
    <DT x={1535} y={860} t="824,5" r={-90} />
    <DT x={1562} y={1085} t="1159,0" r={-90} />
    <DT x={1587} y={1352} t="325,0" r={-90} />
    <DT x={1585} y={615} t="24,7" r={-90} />

    {/* tags */}
    <Tag x={592} y={673} w={96} a="0.2" b="ROOM" v="8,99 m" />
    <Tag x={914} y={673} w={125} a="0.1" b="ANTECHAMBER" v="" />
    <Tag x={631} y={928} w={90} a="0.3" b="KITCHEN" v="9,62 m" pale />
    <Tag x={1005} y={836} w={87} a="0.6" b="TOILET" v="1,1 m" />
    <Tag x={857} y={1034} w={110} a="0.5" b="HALL/STAIRS" v="11,19 m" />
    <Tag x={1252} y={713} w={90} a="0.7" b="GARAGE" v="19,36 m" />
    <Tag x={752} y={1256} w={127} a="0.4" b="LIVING ROOM" v="39,34 m" />

    {/* arrows, kitchen ones with a glow */}
    <g filter="url(#glow)" fill="none" stroke="#ffdc20" strokeWidth="11">
      <polygon points="562,1148 583,1148 583,1100 643,1038 654,1052 656,1013 618,1018 630,1029 562,1094" />
      <polygon points="701,984 790,897 790,866 809,866 777,829 746,866 764,866 764,888 685,966" />
      <polygon points="569,850 577,850 577,885 651,960 657,975 641,975 645,970 569,894" />
    </g>
    <g stroke="#888" strokeWidth="1">
      <polygon points="563,864 583,864 583,818 643,753 654,769 656,730 618,734 630,746 563,810" fill={SUP} fillOpacity="0.85" />
      <polygon points="701,702 790,615 790,584 809,584 777,547 746,584 764,584 764,609 686,685" fill={EXH} fillOpacity="0.9" />
      <polygon points="967,682 739,695 737,676 702,710 741,738 740,721 967,705" fill={VENT} stroke="#3a9ac8" />
      <polygon points="1001,664 1080,586 1080,563 1063,563 1094,526 1125,563 1106,563 1106,594 1013,673" fill={EXH} fillOpacity="0.9" />
      <polygon points="979,1020 1004,1020 1004,755 1022,755 991,717 960,755 979,755" fill={VENT} stroke="#7adfff" />
      <polygon points="1275,846 1267,855 1025,717 1021,725 1013,703 1035,705 1031,710" fill={VENT} stroke="#3a9ac8" />
      <polygon points="1185,719 1197,719 1197,759 1264,824 1274,824 1275,846 1253,842 1260,835 1185,763" fill="#80ffff" fillOpacity="0.9" stroke="#5ac8c8" />
      <polygon points="967,1031 967,1047 714,1009 714,1016 702,1000 721,988 719,996" fill={VENT} stroke="#3a9ac8" />
      <polygon points="569,567 575,567 575,607 656,688 650,692 569,611" fill="#80ffff" stroke="#4ab8b8" />
      <polygon points="886,547 892,547 892,588 972,668 973,676 962,672 886,592" fill="#80ffff" stroke="#4ab8b8" />
      <polygon points="713,1488 738,1488 738,1428 792,1377 805,1390 808,1340 761,1345 773,1358 713,1418" fill={SUP} stroke="#5ab8b8" />
      <polygon points="853,1313 942,1224 942,1194 961,1194 930,1157 898,1194 917,1194 917,1215 837,1295" fill={EXH} stroke="#888" />
      <polygon points="562,1148 583,1148 583,1100 643,1038 654,1052 656,1013 618,1018 630,1029 562,1094" fill={SUP} stroke="#888" />
      <polygon points="701,984 790,897 790,866 809,866 777,829 746,866 764,866 764,888 685,966" fill={EXH} stroke="#666" />
      <polygon points="569,850 577,850 577,885 651,960 657,975 641,975 645,970 569,894" fill="#c6d840" stroke="#666" />
      <polygon points="563,830 583,830 583,865 563,865" fill="#a8dca0" />
    </g>

    {/* arrow captions */}
    <DT x={609} y={781} t="60,0 m³/h" r={-45} fill="#7ab8c0" size={18} />
    <DT x={733} y={660} t="180,0 m³/h" r={-45} fill="#9aa8b8" size={18} />
    <DT x={853} y={698} t="103,7 m³/h" r={-4} fill="#6aa8c8" size={18} />
    <DT x={1047} y={625} t="120,0 m³/h" r={-45} fill="#9aa8b8" size={18} />
    <DT x={991} y={890} t="177,8 m³/h" r={90} fill="#5a9ac0" size={18} />
    <DT x={1140} y={778} t="34,0 m³/h" r={30} fill="#5a9ac0" size={18} />
    <DT x={1232} y={782} t="72,0 m³/h" r={42} fill="#6ab0b0" size={16} />
    <DT x={618} y={925} t="26,0 m³/h" r={46} fill="#7a8a40" size={16} />
    <DT x={735} y={945} t="120,0 m³/h" r={-45} fill="#7a8a98" size={18} />
    <DT x={610} y={1065} t="60,0 m³/h" r={-45} fill="#7ab8c0" size={18} />
    <DT x={838} y={1025} t="34,0 m³/h" r={8} fill="#5a9ac0" size={17} />
    <DT x={756} y={1410} t="250,0 m³/h" r={-56} fill="#6ab0b0" size={17} />
    <DT x={885} y={1270} t="180,0 m³/h" r={-56} fill="#9aa8b8" size={17} />

    {/* axes */}
    <path d="M508 427V576M1145 427V576M1441 427V576M507 1597V1683M1145 1597V1683M1441 1150V1683" stroke="#000" strokeWidth="2" strokeDasharray="16 7 3 7" fill="none" />
    <Axis y={598} label="A" />
    <Axis y={1129} label="B" />
    <Axis y={1575} label="C" />

    {/* origin */}
    <polygon points="446,576 486,535 486,576" fill="#3eb73e" />
    <polygon points="486,577 527,577 486,618" fill="#3eb73e" />
    <path d="M486 492V662M401 576H569" stroke="#ff1010" strokeWidth="2.500" />

    {/* room bubbles */}
    <Room x={675} y={718} r={25} l={["0.2", "6,39 m²", "+20 °C", "833 W"]} />
    <Room x={991} y={696} r={25} l={["0.1", "6,53 m²", "+20 °C", "657 W"]} />
    <Room x={675} y={1000} r={25} l={["0.3", "14,30 m²", "+20 °C", "788 W"]} />
    <Room x={991} y={1052} r={25} l={["-1.1", "7,76 m²", "+20 °C", "685 W"]} />
    <Room x={1071} y={864} r={23} l={["0.6", "2,66 m²", "+20 °C", "55 W"]} />
    <Room x={1293} y={869} r={26} l={["0.7", "19,37 m²", "+12 °C", "1027 W"]} />
    <Room x={828} y={1328} r={27} l={["0.4", "34,65 m²", "+20 °C", "1821 W"]} />

    {/* cursor on the selected bubble */}
    <circle cx="693" cy="998" r="9" fill="#cfe6f8" stroke="#2a6ab8" strokeWidth="5" />
    <path d="M696 992a7 7 0 1 0 3 9" fill="none" stroke="#111" strokeWidth="2" />

    {/* blue labels */}
    <DT x={623} y={621} t="hp 90" fill="#1a1aff" size={13} bold />
    <DT x={614} y={539} t="176,0" r={-90} fill="#1a1aff" size={13} bold />
    <DT x={631} y={539} t="105,0" r={-90} fill="#1a1aff" size={13} bold />
    <DT x={450} y={704} t="176,0" fill="#1a1aff" size={12} />
    <DT x={450} y={721} t="105,0" fill="#1a1aff" size={12} />
    <DT x={450} y={1017} t="176,0" fill="#1a1aff" size={12} />
    <DT x={450} y={1034} t="105,0" fill="#1a1aff" size={12} />
    <DT x={450} y={1313} t="201,0" fill="#1a1aff" size={12} />
    <DT x={450} y={1332} t="105,0" fill="#1a1aff" size={12} />
    <DT x={531} y={713} t="hp 90" r={-90} fill="#1a1aff" size={13} bold />
    <DT x={531} y={1020} t="hp 90" r={-90} fill="#b4b4fa" size={13} bold />
    <DT x={531} y={1325} t="hp 90" r={-90} fill="#1a1aff" size={13} bold />
    <DT x={437} y={996} t="A" fill="#1a1aff" size={22} />
    <DT x={1487} y={996} t="A" fill="#1a1aff" size={22} />
    <DT x={816} y={1633} t="501,0" r={-90} fill="#1a1aff" size={13} bold />
    <DT x={834} y={1633} t="195,0" r={-90} fill="#1a1aff" size={13} bold />
    <DT x={982} y={1099} t="19x17,5" fill="#1a1aff" size={12} />
    <DT x={982} y={1112} t="26" fill="#1a1aff" size={12} />
    <path d="M950 1106H1010" stroke="#b4b4fa" markerEnd="url(#ah)" />
    {[
      { x: 449, y: 609, w: 20, h: 30, t: "a" },
      { x: 778, y: 749, w: 22, h: 30, t: "b" },
      { x: 952, y: 881, w: 21, h: 31, t: "d" },
      { x: 1089, y: 963, w: 18, h: 32, t: "c" },
    ].map((b) => (
      <g key={b.t}>
        <rect x={b.x} y={b.y} width={b.w} height={b.h} fill="#fff" stroke="#c4c4fa" />
        <DT x={b.x + b.w / 2} y={b.y + b.h / 2} t={b.t} fill="#1a1aff" size={18} />
      </g>
    ))}
    <g>
      <circle cx="1041" cy="535" r="8" fill="#fff" stroke="#1a1aff" />
      <path d="M1041 535V527A8 8 0 0 1 1049 535ZM1041 535V543A8 8 0 0 1 1033 535Z" fill="#1a1aff" />
      <DT x={1071} y={525} t="±0,00" fill="#1a1aff" size={16} />
      <circle cx="915" cy="625" r="8" fill="#fff" stroke="#1a1aff" />
      <path d="M915 625V617A8 8 0 0 1 923 625ZM915 625V633A8 8 0 0 1 907 625Z" fill="#1a1aff" />
      <DT x={945} y={615} t="+0,15" fill="#1a1aff" size={16} />
    </g>
  </svg>
);

// --- 3D view, coordinates picked off the reference at its own aspect ---
const View3D = () => (
  <svg width="869" height="577" viewBox="18 15 1530 1220" preserveAspectRatio="none" className="block">
    <defs>
      <linearGradient id="sky" x1="0" x2="0" y1="0" y2="1">
        <stop offset="0.480" stopColor="#c6daf2" />
        <stop offset="0.700" stopColor="#ffffff" />
      </linearGradient>
    </defs>
    <rect x="18" y="15" width="1530" height="1220" fill="url(#sky)" />
    <polygon points="18,570 1010,1235 945,1235 18,615" fill="#dfdfe2" stroke="#999" strokeWidth="2" />
    <polygon points="600,465 725,388 1210,710 1546,480 1546,840 1350,970" fill="#cbd6e0" />
    <polygon points="18,15 1546,15 1546,480 1210,710 725,375 600,465 235,225 18,80" fill="#98737f" />
    <polygon points="385,145 725,375 1135,340 895,175" fill="#a67a84" />
    <polygon points="725,330 895,175 1133,335 1135,340 1198,690 1210,710 725,375" fill="#9c7175" />
    <polygon points="1208,210 1408,70 1546,160 1546,480 1208,705" fill="#b98793" />
    <polygon points="18,15 18,80 235,225 385,145 360,15" fill="#8d6b82" />
    <polygon points="1133,15 1490,15 1208,210 1133,330 895,175 895,15" fill="#a24f5c" />
    <polygon points="362,15 415,15 415,118 362,85" fill="#a34d58" />
    <polygon points="620,15 660,15 660,330 620,305" fill="#9a6c72" />
    <polygon points="660,15 725,15 725,375 660,330" fill="#a64b56" />
    <polygon points="1198,215 1208,210 1208,705 1198,690" fill="#a1434d" stroke="#a00" strokeWidth="2" />
    <polygon points="1208,210 1546,0 1546,130 1408,70" fill="#a04a5a" />
    <path d="M1208 210 1135 330 895 175M1133 15V330M725 15V375M660 15V330M415 15V120" stroke="#a00" strokeWidth="2" fill="none" />

    {/* door leaves in back walls */}
    <polygon points="415,15 540,15 535,45 430,125 415,115" fill="#7a5a3e" stroke="#5a7a2a" strokeWidth="2" />
    <polygon points="500,15 620,15 620,305 500,225" fill="#7c5a3e" stroke="#5a7a2a" strokeWidth="2" />
    <polygon points="685,15 810,15 810,235 690,310" fill="#8a5945" stroke="#5a7a2a" strokeWidth="2" />
    <polygon points="935,15 1050,15 1050,270 935,205" fill="#8c6048" stroke="#5a7a2a" strokeWidth="2" />
    <polygon points="845,105 1080,255 1070,610 843,460" fill="#7f6a4e" stroke="#3a8a2a" strokeWidth="2.500" />
    <path d="M843 460 1070 610" stroke="#45c04a" strokeWidth="5" />

    {/* blue flow on the floor */}
    <polygon points="775,518 875,520 850,545 1255,815 1225,842 800,572 782,587" fill="#84c8e6" />
    <polygon points="400,355 545,255 560,270 425,370" fill="#7c8fb2" fillOpacity="0.7" />
    <polygon points="1345,612 1445,620 1420,640 1465,670 1465,845 1420,845 1410,690 1355,680" fill="#c8d6e8" />

    {/* front wall */}
    <polygon points="18,80 1350,970 1546,840 1546,1235 1010,1235 18,570" fill="#bc8383" fillOpacity="0.97" />
    <polygon points="215,240 235,225 600,465 225,715 215,730" fill="#a65057" />
    <polygon points="18,80 215,240 215,730 18,570" fill="#ad7b7b" />
    <polygon points="1330,990 1350,975 1375,990 1375,1235 1330,1235" fill="#ad5055" stroke="#a00" strokeWidth="2" />
    <path d="M18 80 1350 970 1546 840M18 570 1010 1235M215 240V730M225 715 600 465M730 620V1050" stroke="#a00" strokeWidth="2" fill="none" />
    <path d="M215 730 18 615M710 1075 1215 715 725 388M1210 710 1546 480" stroke="#999" strokeWidth="2" fill="none" />

    {/* cyan windows */}
    <polygon points="18,15 185,15 185,150 18,260" fill="#4ec4c8" />
    <polygon points="18,165 190,275 190,540 180,545 18,420" fill="#5ccaca" stroke="#5ff" strokeWidth="2" />
    <polygon points="440,455 670,600 670,865 440,720" fill="#5fcccc" stroke="#5ff" strokeWidth="2" />
    <polygon points="860,735 1090,880 1090,1145 860,1000" fill="#86979a" stroke="#5ff" strokeWidth="2" />
    <polygon points="1510,1010 1546,985 1546,1235 1515,1235" fill="#8b9da0" stroke="#5ff" strokeWidth="2" />

    {/* flow arrows over the wall */}
    <polygon points="712,673 765,673 765,495 722,465 745,447 642,443 652,512 708,510" fill="#d6c45a" fillOpacity="0.9" stroke="#e0c830" />
    <polygon points="372,668 385,662 440,705 660,700 660,692 688,710 660,725 440,722" fill="#c0c850" fillOpacity="0.9" stroke="#d0c830" />
    <polygon points="720,920 720,790 688,788 740,745 793,788 760,790 760,905 830,950 802,975" fill="#c8b048" fillOpacity="0.9" stroke="#d8b830" />
    <polygon points="305,630 305,510 272,510 325,470 378,510 345,510 345,630 415,670 400,680" fill="#8a6f78" />
    <polygon points="770,1100 780,1072 1230,860 1245,875 810,1100" fill="#73a0b0" />
    <polygon points="770,1100 800,1075 820,1100" fill="#8ccde6" />
    <polygon points="1415,1090 1415,965 1375,968 1448,920 1506,968 1460,968 1460,1095 1546,1150 1546,1160 1515,1155" fill="#8f7883" />
    <polygon points="355,335 460,390 355,405" fill="#98525c" />
    <polygon points="228,165 345,225 345,370 298,300 230,260" fill="#b58a96" fillOpacity="0.6" />

    {/* flow text */}
    <g fill="#7a5a68" fontSize="25">
      <text x="95" y="440" fill="#4aa8a8">16,3 m³/h</text>
      <text x="520" y="100" fill="#6a5a48">11,9 m³/h</text>
      <text transform="translate(338 620) rotate(-90)" >60,0 m³/h</text>
      <text transform="translate(335 395) rotate(-90)" >180,0 m³/h</text>
      <text transform="translate(752 895) rotate(-90)" >60,0 m³/h</text>
      <text transform="translate(748 670) rotate(-90)" >120,0 m³/h</text>
      <text transform="translate(1447 840) rotate(-90)" fill="#556a99">180,0 m³/h</text>
      <text transform="translate(1450 1090) rotate(-90)" >250,0 m³/h</text>
      <text transform="translate(960 835) rotate(-32)" >34,0 m³/h</text>
      <text transform="translate(965 490) rotate(33)" >177,8 m³/h</text>
      <text transform="translate(505 290) rotate(-40)" fill="#6f7fa0">103,7 m³/h</text>
      <text x="505" y="718" fill="#a0b050">26,0 m³/h</text>
    </g>

    {/* bubbles */}
    <ellipse cx="332" cy="435" rx="52" ry="35" fill="#a5606a" fillOpacity="0.6" stroke="#5a2028" strokeWidth="3" />
    <ellipse cx="748" cy="715" rx="52" ry="37" fill="#b07a7a" stroke="#4a1a20" strokeWidth="3" />
    <ellipse cx="1448" cy="885" rx="55" ry="38" fill="#c0c0c4" stroke="#222" strokeWidth="3" />
    <ellipse cx="757" cy="97" rx="50" ry="35" fill="none" stroke="#6a2028" strokeWidth="2.500" />
    <ellipse cx="1118" cy="183" rx="48" ry="33" fill="none" stroke="#6a2028" strokeWidth="2.500" />

    {/* view cube */}
    <polygon points="1303,115 1405,65 1505,115 1405,180" fill="#9c8088" fillOpacity="0.9" />
    <polygon points="1303,115 1405,180 1405,325 1315,240" fill="#6e5a64" fillOpacity="0.95" />
    <polygon points="1405,180 1505,115 1495,270 1405,325" fill="#866c78" fillOpacity="0.9" />
    <path d="M1303 115 1405 65 1505 115 1495 270 1405 325 1315 240ZM1303 115 1405 180 1505 115M1405 180V325" fill="none" stroke="#554" strokeWidth="1.500" />
    <text transform="translate(1375 130) rotate(-28)" fontSize="26" fill="#e8c8c8">GÓRA</text>
    <text transform="translate(1330 215) rotate(40)" fontSize="26" fill="#eee">LEWA</text>
    <text transform="translate(1430 250) rotate(-48)" fontSize="26" fill="#d8c0c8">PRZÓD</text>

    {/* crosshair */}
    <path d="M706 723H775" stroke="#fff" strokeWidth="9" />
    <path d="M741 682V766" stroke="#fff" strokeWidth="7" />

    {/* orientation gizmo */}
    <g>
      <path d="M193 1020V960M193 1020 130 985M193 1020 255 985" stroke="#000" strokeWidth="12" />
      <path d="M193 893 208 958H178zM100 963 150 975 125 1010zM287 963 237 975 262 1010z" fill="#000" />
      <ellipse cx="193" cy="1026" rx="16" ry="18" fill="#000" />
      <text x="210" y="885" textAnchor="middle" fontSize="40" fill="#000">Z</text>
      <text x="118" y="950" textAnchor="middle" fontSize="40" fill="#000">Y</text>
      <text x="302" y="950" textAnchor="middle" fontSize="40" fill="#000">X</text>
    </g>
  </svg>
);

// --- bottom bars ---
const LevelTab = ({ w, icon, text, active, cx = "" }: { w: string; icon: React.ReactNode; text: string; active?: boolean; cx?: string }) => (
  <div
    className={`${w} ${cx} h-[42px] shrink-0 flex items-center gap-[3px] pl-[3px] text-[22px] rounded-bl-[10px] border-l-2 border-b-[3px] whitespace-nowrap overflow-hidden ${
      active
        ? "bg-[#ffcc00] border-[#e0e0e0] font-bold text-[#111] [clip-path:polygon(0_0,100%_0,calc(100%-40px)_100%,0_100%)] z-10"
        : "bg-[#f8f8f8] border-[#c8c8c8] text-[#111] [clip-path:polygon(0_0,100%_0,100%_15%,calc(100%-15px)_100%,0_100%)]"
    }`}
  >
    {icon}
    <span>{text}</span>
  </div>
);

const SquareBtn = ({ w, children }: { w: string; children: React.ReactNode }) => (
  <div className={`${w} h-[44px] shrink-0 bg-gradient-to-b from-[#f2f2f2] to-[#e4e4e6] border-[3px] border-[#b4b4b8] flex items-center justify-center`}>{children}</div>
);

const StatusFlags = ({ on, off, bar }: { on: string; off: string; bar: string }) => (
  <div className="flex items-center text-[22.500px] whitespace-nowrap">
    <span className={on}>ORTO</span>
    <span className={`${bar} w-[2px] h-[24px] mx-[10px]`} />
    <span className={off}>BLOK</span>
    <span className={`${bar} w-[2px] h-[24px] mx-[10px]`} />
    <span className={off}>SIAT</span>
    <span className={`${bar} w-[2px] h-[24px] mx-[10px]`} />
    <span className={on}>AUTO</span>
    <span className={`${bar} w-[2px] h-[24px] mx-[10px]`} />
    <span className={off}>POWT</span>
  </div>
);

// --- property table ---
type Row = {
  label: React.ReactNode;
  value: string;
  unit: React.ReactNode;
  kind: "calc" | "edit" | "ro";
};

const M3H = (
  <>
    m<sup>3</sup>/h
  </>
);

const rows: Row[] = [
  { label: "e", value: "0,03", unit: "[−]", kind: "calc" },
  { label: "ε", value: "1,0", unit: "[−]", kind: "calc" },
  { label: <>n<sub>min</sub></>, value: "1,5", unit: "1/h", kind: "calc" },
  { label: <>V̇<sub>min</sub></>, value: "53,6", unit: M3H, kind: "calc" },
  { label: <>V̇<sub>ex</sub></>, value: "120,0", unit: M3H, kind: "edit" },
  { label: <>V̇<sub>su</sub></>, value: "60,0", unit: M3H, kind: "edit" },
  { label: <>θ<sub>su</sub></>, value: "20,0", unit: "°C", kind: "calc" },
  { label: <>V̇<sub>mech,inf,e</sub></>, value: "26,0", unit: M3H, kind: "calc" },
  { label: <>V̇<sub>mech,inf,ij</sub></>, value: "34,0", unit: M3H, kind: "ro" },
];

const TableRow = ({ row }: { row: Row }) => (
  <div className="flex h-[46px] mb-[1.500px] text-[23px]">
    <div className={`w-[386px] bg-white pl-[6px] flex items-center ${row.kind === "ro" ? "text-[#8a8a8a]" : "text-[#111]"}`}>{row.label}</div>
    <div
      className={`w-[420px] ml-[2px] flex items-center pl-[4px] pr-[2px] ${
        row.kind === "calc" ? "bg-[#e3eef9] text-[#3a3a8c]" : row.kind === "edit" ? "bg-white text-[#111]" : "bg-[#f0f0f0] text-[#111]"
      }`}
    >
      <span>{row.value}</span>
      <span className="ml-auto text-[#333] mr-[8px]">{row.unit}</span>
      <div className="w-[24px] h-[26px]">{row.kind === "calc" ? <Computer /> : row.kind === "edit" ? <Pencil /> : null}</div>
    </div>
  </div>
);

const Dots = ({ color }: { color: string }) => (
  <div
    className="flex-1 h-[12px] mx-[16px]"
    style={{ backgroundImage: `radial-gradient(${color} 1px, transparent 1.2px)`, backgroundSize: "4px 4px" }}
  />
);

export default function App() {
  return (
    <div className="w-[3072px] h-[1840px] bg-[#f0f0f0] flex flex-col overflow-hidden font-['Open_Sans',sans-serif] text-[#222]">
      {/* title bar */}
      <div className="h-[70px] flex items-center shrink-0">
        <div className="ml-[20px]"><LogoDrop w={24} h={30} small /></div>
        <div className="ml-[35px]"><Floppy /></div>
        <div className="ml-[24px]"><OpenFolder /></div>
        <div className="ml-[28px]"><BlankDoc /></div>
        <div className="ml-[591px] w-[1448px] text-[22.700px] text-[#444] whitespace-nowrap">
          C:\Users\kowalczykr\Desktop\Szkolenie Tweetop 06.09.2021\HL\Strumienie.isproj* - Edytor InstalSystem 5 InstalSoft BETA-PL (Rev. 22.B1)
        </div>
        <div className="ml-[307px]"><LogoDrop w={35} h={44} /></div>
        <div className="ml-[9px] w-[160px] text-[22px] font-medium text-[#4a4a4a] font-['Roboto',sans-serif] whitespace-nowrap">INSTALSYSTEM</div>
        <div className="ml-[73px] w-[20px] h-[2.500px] bg-[#444]" />
        <svg width="20" height="20" viewBox="0 0 20 20" className="ml-[69px] shrink-0">
          <path d="M5 5V1h14v14h-4M1 5h14v14H1z" fill="none" stroke="#444" strokeWidth="2" />
        </svg>
        <div className="ml-[68px]"><CloseX size={21} /></div>
      </div>

      {/* menu row */}
      <div className="h-[61px] flex items-start shrink-0">
        <div className="ml-[50px] mt-[10px] text-[25px] leading-[30px] text-[#222]">Plik</div>
        <div className="ml-[71px] mt-[10px] w-[216px] flex flex-col text-[26px] leading-[30px] text-[#111] whitespace-nowrap">
          <span>Narzędzia główne</span>
          <div className="h-[6px] mt-[7px] bg-[#0078cf]" />
        </div>
        <div className="ml-auto mt-[1px] mr-[13px] flex gap-[14px]">
          <TopButton w="w-[100px]">
            Okna <Chev size={11} color="#444" />
          </TopButton>
          <TopButton w="w-[288px]">
            Zmiana układu ekranu <Chev size={11} color="#444" />
          </TopButton>
          <TopButton w="w-[56px]"><SaveScreen /></TopButton>
          <TopButton w="w-[56px]"><FilmStrip /></TopButton>
          <TopButton w="w-[56px]"><InfoDrop /></TopButton>
          <TopButton w="w-[56px]"><Chev size={20} color="#0078cf" up /></TopButton>
        </div>
      </div>

      {/* ribbon */}
      <div className="h-[174px] flex shrink-0">
        <Obliczenia />
        <Sep />
        <Edycja />
        <Sep />
        <Widok />
        <Sep />
        <Opisy />
        <Sep />
        <div className="flex-1 flex items-end justify-end pr-[13px] pb-[2px]">
          <Chev size={20} color="#111" up />
        </div>
      </div>
      <div className="h-[11px] shrink-0 border-b-[3px] border-[#c8c8c8]" />

      {/* workspace */}
      <div className="flex-1 flex min-h-0">
        {/* left side strip */}
        <div className="w-[63px] shrink-0 pt-[11px] flex flex-col">
          <div className="h-[318px] flex">
            <div className="w-[11px] bg-[#c6c6ca]" />
            <div className="flex-1 flex flex-col items-center pt-[2px] pr-[4px]">
              <svg width="30" height="30" viewBox="0 0 30 30" className="shrink-0">
                <circle cx="4" cy="4" r="2.500" fill="#2a88d8" />
                <circle cx="11" cy="4" r="2.500" fill="#2a88d8" />
                <circle cx="18" cy="4" r="2.500" fill="#2a88d8" />
                <circle cx="25" cy="4" r="2.500" fill="#2a88d8" />
                <path d="M4 9v20M8 9v20M11 9v20M15 9v20M18 9v20M22 9v20M25 9v20" stroke="#aaa" />
              </svg>
              <div className="[writing-mode:vertical-rl] text-[21.500px] leading-[30px] mt-[8px] whitespace-nowrap h-[232px] text-[#222]">Przeglądarka projektu</div>
              <div className="mt-[3px]"><Pin color="#333" /></div>
              <div className="mt-[8px]"><CloseX size={18} color="#333" /></div>
            </div>
          </div>
          <div className="h-[25px]" />
          <div className="h-[187px] flex">
            <div className="w-[11px] bg-[#c6c6ca]" />
            <div className="flex-1 flex flex-col items-center pr-[4px]">
              <svg width="32" height="34" viewBox="0 0 32 34" className="shrink-0">
                <path d="M2 1l10 12" stroke="#e8922a" strokeWidth="3.500" />
                <circle cx="18" cy="20" r="12" fill="#d6eaf6" stroke="#8a9aa4" strokeWidth="2.500" />
                <rect x="12" y="16" width="4" height="3" fill="#1a5fc0" />
                <rect x="12" y="21" width="4" height="3" fill="#1a5fc0" />
                <rect x="19" y="15" width="4" height="10" fill="#1a5fc0" />
              </svg>
              <div className="[writing-mode:vertical-rl] text-[21.500px] leading-[30px] mt-[7px] whitespace-nowrap h-[97px] text-[#222]">Wyszukaj</div>
              <div className="mt-[2px]"><Pin color="#333" /></div>
              <div className="mt-[6px]"><CloseX size={18} color="#333" /></div>
            </div>
          </div>
        </div>

        {/* editor column */}
        <div className="w-[2117px] shrink-0 pt-[11px] flex flex-col">
          <div className="h-[44px] flex items-center shrink-0">
            <div className="w-[212px] h-[44px] bg-[#d6d6da] flex items-center pl-[13px] gap-[10px]">
              <Drafting />
              <span className="text-[23px] text-[#444] whitespace-nowrap mt-[4px]">Edytor 2D</span>
              <div className="ml-[8px]"><CloseX size={20} color="#555" /></div>
            </div>
            <div className="ml-auto mr-[10px] mt-[4px]"><Chev size={14} color="#555" /></div>
          </div>
          <div className="h-[1406px] w-[2115px] bg-[#c8c8cc] pt-[6px] pl-[2px] pr-[3px] pb-[2px] flex flex-col shrink-0">
            <div className="flex shrink-0">
              <div className="w-[50px] h-[50px] bg-[#d8d8dc] flex flex-col items-center">
                <svg width="32" height="32" viewBox="0 0 32 32">
                  <path d="M6 8H30M6 8V30" stroke="#333" strokeWidth="3" />
                  <path d="M12 4v8M18 4v8M24 4v8M2 14h8M2 20h8M2 26h8" stroke="#333" strokeWidth="2" />
                  <path d="M1 26h10l-5 6z" fill="#333" />
                </svg>
                <span className="text-[17px] leading-[17px] text-[#333]">89</span>
              </div>
              <TopRuler />
            </div>
            <div className="flex shrink-0">
              <LeftRuler />
              <Plan />
            </div>
            {/* level tabs */}
            <div className="h-[44px] bg-[#f0f0f0] flex items-center shrink-0">
              <SquareBtn w="w-[35px]"><ArrowBtn up w={18} h={30} /></SquareBtn>
              <div className="ml-[4px]"><SquareBtn w="w-[34px]"><ArrowBtn w={18} h={30} /></SquareBtn></div>
              <div className="ml-[4px] w-[248px] h-[44px] shrink-0 bg-gradient-to-b from-[#f2f2f2] to-[#e2e2e4] border-y-[3px] border-[#b4b4b8] flex items-center pl-[46px] text-[22px] text-[#222]">
                <svg width="32" height="34" viewBox="0 0 32 34" className="shrink-0">
                  <rect x="1" y="1" width="30" height="32" fill="#f4f4f4" />
                  <rect x="10" y="11" width="21" height="14" fill="#e4d4b8" />
                  <path d="M0 3h32M0 31h32M1 11v14M10 11 31 30" stroke="#666" strokeWidth="2.500" />
                  <rect x="8" y="13" width="9" height="10" fill="none" stroke="#888" />
                </svg>
                <span className="ml-[12px]">0 Parter</span>
                <div className="ml-auto mr-[9px]"><Chev size={15} color="#222" /></div>
              </div>
              <div className="ml-auto flex items-center pr-[7px]">
                <LevelTab w="w-[135px]" icon={<Bulb />} text="Podkład" />
                <LevelTab w="w-[180px]" cx="ml-[4px]" icon={<Bulb />} text="Konstrukcja" />
                <LevelTab w="w-[123px]" cx="ml-[2px]" icon={<RedX w={26} h={30} />} text="OZC(T)" />
                <LevelTab w="w-[152px]" cx="ml-[3px]" icon={<Bulb />} text="OZC(V)" active />
                <LevelTab w="w-[134px]" cx="ml-[-24px]" icon={<Bulb />} text="Wydruk" />
                <div className="ml-[13px]"><Chev size={15} color="#222" /></div>
                <svg width="30" height="40" viewBox="0 0 30 40" className="ml-[6px] shrink-0">
                  <rect x="1" y="1" width="27" height="24" fill="#a8dcf4" stroke="#3aa4dc" strokeWidth="2" />
                  <path d="M5 28H25" stroke="#2a88c8" strokeWidth="2" />
                  <path d="M14 12a3 3 0 0 1 5 0v8l8 2 1 10-8 6-8-6-6-8 5-2z" fill="#f0cfae" stroke="#a88868" />
                </svg>
              </div>
            </div>
            <div className="h-[48px] bg-[#0078cf] flex items-center shrink-0 text-white">
              <div className="ml-[20px]"><Warn /></div>
              <div className="ml-[41px] text-[22.500px] whitespace-nowrap">19,736; -0,835; 19,194</div>
              <div className="ml-auto">
                <StatusFlags on="text-white" off="text-[#4a9ed8]" bar="bg-white" />
              </div>
              <div className="ml-[37px] mr-[30px]"><Chev size={16} color="#fff" /></div>
            </div>
          </div>
          <div className="flex items-center h-[36px] mt-[16px] pl-[2px] shrink-0">
            <svg width="28" height="32" viewBox="0 0 28 32" className="shrink-0">
              <rect x="2" y="2" width="24" height="28" fill="#f8f8f8" stroke="#777" strokeWidth="2.500" />
              <rect x="8" y="0" width="12" height="5" fill="#999" />
              <circle cx="20" cy="25" r="7" fill="#d81a2a" />
              <path d="M17 22l6 6M23 22l-6 6" stroke="#fff" strokeWidth="1.500" />
            </svg>
            <span className="ml-[10px] text-[22px] text-[#444] whitespace-nowrap">Diagnostyka</span>
            <div className="ml-[3px]"><Pin /></div>
            <div className="ml-[6px]"><CloseX size={20} /></div>
          </div>
          <div className="w-[219px] h-[12px] bg-[#c0c0c4] shrink-0" />
        </div>

        {/* right column */}
        <div className="w-[869px] ml-[10px] pt-[13px] shrink-0 flex flex-col">
          <div className="h-[44px] bg-[#0078cf] flex items-center pl-[10px] pr-[12px] text-white shrink-0">
            <svg width="28" height="34" viewBox="0 0 28 34" className="shrink-0">
              <rect x="1" y="1" width="22" height="31" fill="#f8f8f8" stroke="#888" />
              <path d="M7 5h12M7 9h12M7 13h12M7 17h12" stroke="#c02a2a" strokeWidth="2" />
              <path d="M4 31 22 10l4 3L9 33z" fill="#f8b83a" stroke="#b07a10" />
            </svg>
            <div className="ml-[12px] w-[10px] h-[10px] rounded-full bg-white" />
            <span className="ml-[12px] text-[22.500px] whitespace-nowrap">Tabela danych</span>
            <Dots color="#a8d4f4" />
            <div className="ml-[4px]"><Chev size={15} color="#d8ecfb" /></div>
            <div className="ml-[20px]"><Pin color="#fff" /></div>
            <div className="ml-[19px]"><CloseX size={20} color="#fff" /></div>
          </div>
          <div className="h-[62px] border-x-2 border-b-[3px] border-[#c8c8c8] flex relative shrink-0">
            <div className="mt-[27px] ml-[10px]"><Chev size={16} color="#222" /></div>
            <div className="flex-1 text-center text-[22.500px] pt-[8px] pl-[6px] text-[#222]">1* Pomieszczenie</div>
          </div>
          <div className="h-[454px] flex border-x-2 border-[#d8d8d8] shrink-0 overflow-hidden">
            <div className="w-[833px] pl-[27px] pt-[2px]">
              {rows.map((r) => (
                <TableRow key={r.value} row={r} />
              ))}
              <div className="flex items-center ml-[-20px] mt-[10px] text-[24px] leading-[28px] text-[#777]">
                <Chev size={14} color="#333" />
                <span className="ml-[8px]">OZC</span>
              </div>
            </div>
            <div className="flex-1 flex flex-col items-center bg-white pt-[16px]">
              <Chev size={18} color="#666" up />
              <div className="w-[11px] h-[60px] bg-[#cdcdcd] mt-[110px]" />
              <div className="mt-[229px]"><Chev size={18} color="#666" /></div>
            </div>
          </div>
          <div className="h-[156px] bg-[#f8f8f8] border-2 border-[#d2d2d2] pl-[24px] pt-[20px] text-[22.800px] font-bold text-[#222] shrink-0">Typ pomieszczenia</div>
          <div className="h-[15px] shrink-0" />
          <div className="h-[45px] bg-[#f0f0f0] border-2 border-b-0 border-[#d2d2d2] flex items-center pl-[10px] pr-[12px] shrink-0">
            <Drafting />
            <span className="ml-[6px] text-[22px] text-[#222] whitespace-nowrap">Widok 3D</span>
            <Dots color="#b8b8b8" />
            <div className="ml-[4px]"><Chev size={15} color="#444" /></div>
            <div className="ml-[20px]"><Pin /></div>
            <div className="ml-[19px]"><CloseX size={20} /></div>
          </div>
          <View3D />
          <div className="h-[44px] flex items-center shrink-0">
            <SquareBtn w="w-[36px]"><ArrowBtn up w={18} h={30} /></SquareBtn>
            <div className="ml-[2px]"><SquareBtn w="w-[36px]"><ArrowBtn w={18} h={30} /></SquareBtn></div>
            <div className="ml-[5px]">
              <SquareBtn w="w-[35px]">
                <svg width="26" height="30" viewBox="0 0 26 30">
                  <path d="M1 1h24L16 14v12l-6 3V14z" fill="#7fd0f0" stroke="#3a9ac8" />
                  <path d="M16 3h9L16 14z" fill="#ffd83a" />
                </svg>
              </SquareBtn>
            </div>
            <div className="ml-[4px] w-[330px] h-[44px] shrink-0 bg-gradient-to-b from-[#f2f2f2] to-[#e2e2e4] border-[3px] border-[#b4b4b8] flex items-center pl-[4px] text-[22px] text-[#222] whitespace-nowrap">
              <svg width="34" height="34" viewBox="0 0 34 34" className="shrink-0">
                <path d="M2 6h30M26 2v30M22 6l4-4 4 4" stroke="#d89a10" strokeWidth="2" fill="none" />
                <rect x="2" y="16" width="16" height="16" fill="#5a72b0" />
                <path d="M2 20h16M2 24h16M2 28h16M7 16v16M12 16v16" stroke="#d8e0f0" />
                <path d="M20 32h12" stroke="#333" strokeWidth="2" />
              </svg>
              <span className="ml-[8px]">Widoczne kondygnacje</span>
              <div className="ml-auto mr-[6px]"><Chev size={15} color="#222" /></div>
            </div>
            <div className="ml-[3px] flex items-center">
              <LevelTab w="w-[74px]" icon={<Bulb />} text="P..." />
              <LevelTab w="w-[75px]" cx="ml-[1px]" icon={<RedX w={26} h={30} />} text="K..." />
              <LevelTab w="w-[74px]" cx="ml-[3px]" icon={<Bulb />} text="O.." />
              <LevelTab w="w-[100px]" cx="ml-[2px]" icon={<Bulb />} text="O.." active />
              <LevelTab w="w-[77px]" cx="ml-[-22px]" icon={<Bulb />} text="W.." />
              <div className="ml-[10px]"><Chev size={15} color="#222" /></div>
            </div>
          </div>
          <div className="h-[50px] border-2 border-t-0 border-[#d2d2d2] bg-[#f0f0f0] flex items-center shrink-0">
            <div className="ml-[19px]"><Warn w={32} h={28} /></div>
            <div className="ml-[42px] text-[22px] text-[#fbfbfb] whitespace-nowrap">-1,510; -8,063; 0,657</div>
            <div className="ml-auto">
              <StatusFlags on="text-[#fdfdfd]" off="text-[#f5f5f5]" bar="bg-[#fdfdfd]" />
            </div>
            <div className="ml-[37px] mr-[27px]"><Chev size={16} color="#fbfbfb" /></div>
          </div>
        </div>
      </div>
    </div>
  );
}
